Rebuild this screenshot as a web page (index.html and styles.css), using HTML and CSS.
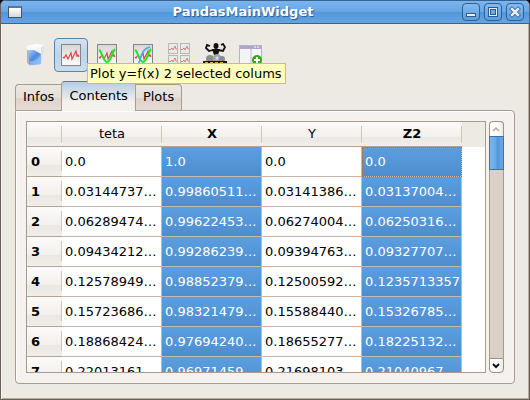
FILE: index.html
```
<!DOCTYPE html>
<html lang="en">
<head>
<meta charset="utf-8">
<title>PandasMainWidget</title>
<link rel="stylesheet" href="styles.css">
</head>
<body>
<svg class="defs" aria-hidden="true">
  <defs>
    <linearGradient id="paper" x2="0" y2="1"><stop offset="0" stop-color="#d6d6d6"/><stop offset="1" stop-color="#fbfbfb"/></linearGradient>
    <linearGradient id="folder" x2="1" y2="1"><stop offset="0" stop-color="#b9d5f7"/><stop offset=".5" stop-color="#4d8bdf"/><stop offset="1" stop-color="#86b9f2"/></linearGradient>
    <linearGradient id="sheet" x2="0" y2="1"><stop offset="0" stop-color="#ffffff"/><stop offset="1" stop-color="#d4dbe6"/></linearGradient>
    <symbol id="plot" viewBox="0 0 20 22">
      <rect x=".5" y=".5" width="19" height="21" fill="url(#paper)" stroke="#858585"/>
      <path d="M2 13l1 1 2-3 2 4 3-6 1 6 4-8 1 5 1-1 1 2" fill="none" stroke="#d94848" stroke-width="1.2"/>
    </symbol>
    <symbol id="mini" viewBox="0 0 10 12">
      <rect x=".5" y=".5" width="9" height="10" fill="#e9e9e9" stroke="#b8b8b8"/>
      <path d="M1 6l1 1 2-2 1 2 2-4 1 3 1 0" fill="none" stroke="#dc8080"/>
    </symbol>
  </defs>
</svg>
<div class="window">
  <header class="titlebar">
    <span class="app-icon"></span>
    <h1>PandasMainWidget</h1>
    <div class="window-buttons">
      <button type="button" aria-label="Minimize"><svg viewBox="0 0 18 18"><rect x="4.500" y="10.500" width="9" height="3" fill="#e4effb" stroke="#2c5a8c"/></svg></button>
      <button type="button" aria-label="Maximize"><svg viewBox="0 0 18 18"><rect x="4.500" y="4.500" width="9" height="9" fill="#e4effb" stroke="#2c5a8c"/><rect x="6.500" y="6.500" width="5" height="5" fill="#6ca9e5" stroke="#2c5a8c"/></svg></button>
      <button type="button" aria-label="Close"><svg viewBox="0 0 18 18"><path d="M6 6l6 6m0-6l-6 6" stroke="#2c5a8c" stroke-width="4" stroke-linecap="square"/><path d="M6 6l6 6m0-6l-6 6" stroke="#e4effb" stroke-width="2.500" stroke-linecap="square"/></svg></button>
    </div>
  </header>
  <main class="content">
    <div class="toolbar">
      <button type="button" aria-label="Open"><svg viewBox="0 0 20 22">
        <path d="M2 2l9-2 8 1v4l-1 1-3 15-11 1z" fill="url(#sheet)"/>
        <path d="M16 3l3-2v5l-3 13z" fill="#dfe2e8"/>
        <path d="M2 6h7l7 4v10l-11 1-3-3z" fill="url(#folder)"/>
        <path d="M2 6l2 1v14l-2-3z" fill="#a5b6ce"/>
        <path d="M4 17c5 1 9-2 12-7v10l-11 1z" fill="#9bc8f6" opacity=".6"/>
      </svg></button>
      <button type="button" class="hot" aria-label="Plot y=f(x)"><svg viewBox="0 0 20 22"><use href="#plot"/></svg>
        <span class="tooltip" role="tooltip">Plot y=f(x) 2 selected colums</span></button>
      <button type="button" aria-label="Fit"><svg viewBox="0 0 20 22"><use href="#plot"/><path d="M2 6c3 1 4 12 8 12s5-10 8-13" fill="none" stroke="#12ee12" stroke-width="2"/></svg></button>
      <button type="button" aria-label="Compare fits"><svg viewBox="0 0 20 22"><use href="#plot"/><path d="M2 6c3 1 4 12 8 12s5-10 8-13" fill="none" stroke="#12ee12" stroke-width="2"/><path d="M5 20c3-3 2-15 12-17" fill="none" stroke="#4aa5f2" stroke-width="1.500"/></svg></button>
      <button type="button" aria-label="Plot matrix"><svg class="wide" viewBox="0 0 24 24"><use href="#mini" x="1" y="0" width="10" height="12"/><use href="#mini" x="13" y="0" width="10" height="12"/><use href="#mini" x="1" y="12" width="10" height="12"/><use href="#mini" x="13" y="12" width="10" height="12"/></svg></button>
      <button type="button" aria-label="Process"><svg class="wide" viewBox="0 0 24 24">
        <ellipse cx="13" cy="3" rx="2.500" ry="3" fill="#111"/>
        <path d="M10 7L6 8 3 5l1-3 3 1m8 4l5 1 2-4-2-3-2 1" fill="none" stroke="#111" stroke-width="1.800"/>
        <path d="M9 6h8l-2 6h-4z" fill="#111"/>
        <circle cx="7" cy="16" r="4" fill="#8d8d8d"/><circle cx="14" cy="15" r="4" fill="#a3a3a3"/><circle cx="19" cy="16" r="3" fill="#8d8d8d"/><circle cx="14" cy="15" r="1.500" fill="#ddd"/>
        <path d="M0 18h24v4H0z" fill="#111"/><path d="M2 20h20" stroke="#e4b51c" stroke-width="2" stroke-dasharray="3 2"/>
      </svg></button>
      <button type="button" aria-label="Add table"><svg class="wide" viewBox="0 0 24 24">
        <rect x=".5" y="2.500" width="22" height="20" fill="#f5f5f9" stroke="#b5b2cc"/>
        <path d="M1 3h21v3H1z" fill="#aaa6d0"/><path d="M12 6v16" stroke="#b9b7cf"/><path d="M15 4h6" stroke="#fff" stroke-dasharray="2 1"/>
        <circle cx="18" cy="17" r="5" fill="#38a41d"/><path d="M15 17h6m-3-3v6" stroke="#fff" stroke-width="2"/>
      </svg></button>
    </div>
    <div class="tabs" role="tablist">
      <button type="button" role="tab">Infos</button>
      <button type="button" role="tab" class="current" aria-selected="true">Contents</button>
      <button type="button" role="tab">Plots</button>
    </div>
    <section class="pane">
      <div class="view">
        <table>
          <colgroup><col class="index"><col class="data"><col class="data"><col class="data"><col class="data"><col></colgroup>
          <thead>
            <tr><th></th><th class="plain">teta</th><th>X</th><th class="plain">Y</th><th>Z2</th><td class="rest"></td></tr>
          </thead>
          <tbody>
            <tr><th>0</th><td>0.0</td><td class="sel">1.0</td><td>0.0</td><td class="sel focus">0.0</td></tr>
            <tr><th>1</th><td>0.03144737…</td><td class="sel">0.99860511…</td><td>0.03141386…</td><td class="sel">0.03137004…</td></tr>
            <tr><th>2</th><td>0.06289474…</td><td class="sel">0.99622453…</td><td>0.06274004…</td><td class="sel">0.06250316…</td></tr>
            <tr><th>3</th><td>0.09434212…</td><td class="sel">0.99286239…</td><td>0.09394763…</td><td class="sel">0.09327707…</td></tr>
            <tr><th>4</th><td>0.12578949…</td><td class="sel">0.98852379…</td><td>0.12500592…</td><td class="sel">0.1235713357</td></tr>
            <tr><th>5</th><td>0.15723686…</td><td class="sel">0.98321479…</td><td>0.15588440…</td><td class="sel">0.15326785…</td></tr>
            <tr><th>6</th><td>0.18868424…</td><td class="sel">0.97694240…</td><td>0.18655277…</td><td class="sel">0.18225132…</td></tr>
            <tr><th>7</th><td>0.22013161…</td><td class="sel">0.96971459…</td><td>0.21698103…</td><td class="sel">0.21040967…</td></tr>
          </tbody>
        </table>
      </div>
      <div class="scrollbar">
        <button type="button" aria-label="Scroll up" disabled><svg viewBox="0 0 13 13"><path d="M3 8l3-3 3 3" fill="none" stroke="#b5aa9c" stroke-width="1.500"/></svg></button>
        <div class="track"><div class="thumb"></div></div>
        <button type="button" aria-label="Scroll down"><svg viewBox="0 0 13 13"><path d="M3 5l3 3 3-3" fill="none" stroke="#111" stroke-width="2"/></svg></button>
      </div>
    </section>
  </main>
</div>
</body>
</html>
```
FILE: styles.css
```
* { box-sizing: border-box; }
body {
  margin: 0;
  background: #10101e;
  color: #000;
  font: 13px/16px "DejaVu Sans", sans-serif;
}
button { margin: 0; padding: 0; font: inherit; color: inherit; }
svg { display: block; }
.defs { position: absolute; width: 0; height: 0; }

.window {
  display: flex;
  flex-direction: column;
  height: 100vh;
  border: 1px solid #6b6158;
  border-top: 0;
  border-radius: 6px 6px 0 0;
  background: #edeae3;
  overflow: hidden;
}
.titlebar {
  display: grid;
  grid-template-columns: 20px 1fr 66px;
  align-items: center;
  height: 24px;
  flex: none;
  padding: 0 5px 0 7px;
  border-top: 1px solid #38628f;
  border-bottom: 1px solid #38628f;
  background: linear-gradient(#7ab5ee, #68a6e4 48%, #5297d8 52%, #66a4e3);
}
.app-icon {
  width: 14px;
  height: 12px;
  border: 1px solid #50504c;
  border-top: 2px solid #53799f;
  background: linear-gradient(#fff, #d8d8d4);
}
h1 {
  margin: 0;
  color: #fff;
  font-size: 13px;
  line-height: 20px;
  text-align: center;
  text-shadow: 1px 1px 1px #2c5a8c;
}
.window-buttons { display: flex; justify-content: flex-end; gap: 4px; }
.window-buttons button {
  width: 18px;
  height: 18px;
  border: 1px solid #2f6092;
  border-radius: 4px;
  background: linear-gradient(#83bbf1, #5c9ddc);
}
.window-buttons svg { width: 18px; height: 18px; margin: -1px; }

.content {
  display: flex;
  flex: 1;
  flex-direction: column;
  min-height: 0;
  padding: 14px 14px 15px;
  box-shadow: inset 1px 0 #f7f5f1, inset -1px -1px #b5a999;
}
.toolbar { display: flex; gap: 2px; padding-left: 3px; }
.toolbar button {
  position: relative;
  display: grid;
  place-items: center;
  width: 34px;
  height: 34px;
  border: 1px solid transparent;
  border-radius: 4px;
  background: none;
}
.toolbar button.hot {
  border-color: #5b83aa;
  background: linear-gradient(#d3e1ef, #bdd4e9 48%, #c9ddef);
}
.toolbar svg { width: 20px; height: 22px; }
.toolbar svg.wide { width: 24px; height: 24px; }
.tooltip {
  position: absolute;
  top: 24px;
  left: 32px;
  z-index: 2;
  padding: 1px 3px 1px 2px;
  border: 1px solid #cbcb3c;
  background: #ffffbe;
  line-height: 17px;
  white-space: nowrap;
}
.tabs { display: flex; align-items: flex-end; margin-top: 9px; }
.tabs button {
  height: 26px;
  padding: 0 7px 2px;
  border: 1px solid #a99c8b;
  border-bottom: 0;
  border-radius: 4px 4px 0 0;
  background: linear-gradient(#ebe7e1, #e6dfd9 50%, #ddd3cb 52%, #e5dcd5);
}
.tabs button:first-child { border-right: 0; border-top-right-radius: 0; }
.tabs button:last-child { border-left: 0; border-top-left-radius: 0; }
.tabs button.current {
  position: relative;
  z-index: 1;
  height: 30px;
  margin-bottom: -1px;
  border-color: #5580a6 #a99c8b;
  background: linear-gradient(#b5cde2, #f5f1ed 70%);
}
.pane {
  display: flex;
  flex: 1;
  gap: 3px;
  min-height: 0;
  padding: 10px;
  border: 1px solid #a99c8b;
  border-radius: 0 4px 4px 4px;
  background: #f5f1ee;
  box-shadow: inset 1px 1px #fff;
}
.view {
  flex: 1;
  min-width: 0;
  border: 1px solid #a79c8c;
  background: #fff;
  overflow: hidden;
}
table { width: 100%; table-layout: fixed; border-collapse: separate; border-spacing: 0; }
.index { width: 35px; }
.data { width: 100px; }
th, td { height: 30px; overflow: hidden; white-space: nowrap; }
td {
  padding: 0 0 0 3px;
  border-right: 1px solid #c3baad;
  border-bottom: 1px solid #c3baad;
}
th {
  padding: 0;
  border-bottom: 1px solid #b1a591;
  background: linear-gradient(90deg, #cdc5b9, #cdc5b9) right center / 1px 70% no-repeat, linear-gradient(#fcfbfa, #f3f0ed 60%, #ebe7e3 64%, #f1eeeb);
}
tbody th { padding-left: 4px; text-align: left; }
thead th, thead td { height: 25px; }
.plain { font-weight: normal; }
.rest { border-right: 0; border-bottom: 0; background: #edeae3; }
.sel { color: #fff; background: linear-gradient(#5b9fe1, #4e8dcd); }
.focus { outline: 1px dotted #9b7258; outline-offset: -1px; }

.scrollbar { display: flex; flex-direction: column; width: 15px; }
.scrollbar button {
  height: 15px;
  border: 1px solid #9a9084;
  background: linear-gradient(90deg, #fff 50%, #eeebe7);
}
.scrollbar button:first-child { border-bottom: 0; border-radius: 4px 4px 0 0; }
.scrollbar button:last-child { border-radius: 0 0 4px 4px; }
.scrollbar svg { width: 13px; height: 13px; }
.track { flex: 1; border: solid #a79c8c; border-width: 0 1px; background: #d9d1c6; }
.thumb {
  height: 34px;
  margin: 0 -1px;
  border: 1px solid #44719f;
  background: linear-gradient(90deg, #7cb6ef, #68a7e6 48%, #5095d7 52%, #69a8e6);
}
```
